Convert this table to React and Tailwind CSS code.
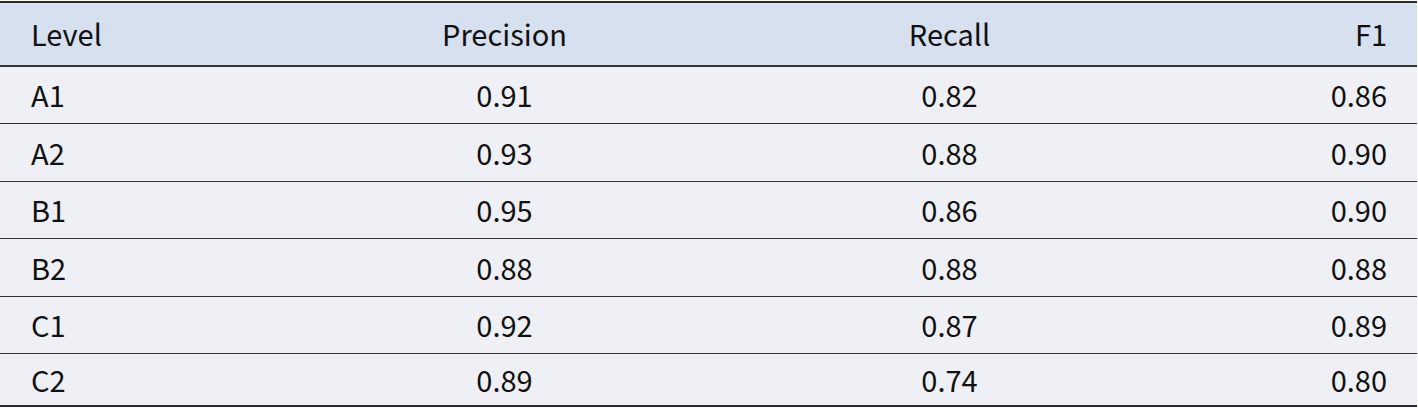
import React from "react";

const rows = [
  ["A1", "0.91", "0.82", "0.86", "h-[57px] border-b"],
  ["A2", "0.93", "0.88", "0.90", "h-[58px] border-b"],
  ["B1", "0.95", "0.86", "0.90", "h-[57px] border-b"],
  ["B2", "0.88", "0.88", "0.88", "h-[58px] border-b"],
  ["C1", "0.92", "0.87", "0.89", "h-[57px] border-b"],
  ["C2", "0.89", "0.74", "0.80", "h-[51px]"],
];

const cols = "grid grid-cols-[282px_445px_445px_1fr] items-center";

export default function App() {
  return (
    <div
      className="w-[1418px] h-[408px] bg-white pt-px text-[#111] text-[29px]"
      style={{ fontFamily: '"Noto Sans CJK SC", "Noto Sans", sans-serif' }}
    >
      <div className="border-t-2 border-b-2 border-[#2a2a2a] w-[1417px]">
        {/* Header */}
        <div className={`${cols} h-[64px] bg-[#d6e0ee] border-b-2 border-[#333]`}>
          <div className="pl-[31px]">Level</div>
          <div className="text-center">Precision</div>
          <div className="text-center">Recall</div>
          <div className="text-right pr-[30px]">F1</div>
        </div>

        {rows.map((r) => (
          <div key={r[0]} className={`${cols} bg-[#eff0f5] border-[#333] ${r[4]}`}>
            <div className="pl-[31px]">{r[0]}</div>
            <div className="text-center">{r[1]}</div>
            <div className="text-center">{r[2]}</div>
            <div className="text-right pr-[30px]">{r[3]}</div>
          </div>
        ))}
      </div>
    </div>
  );
}
